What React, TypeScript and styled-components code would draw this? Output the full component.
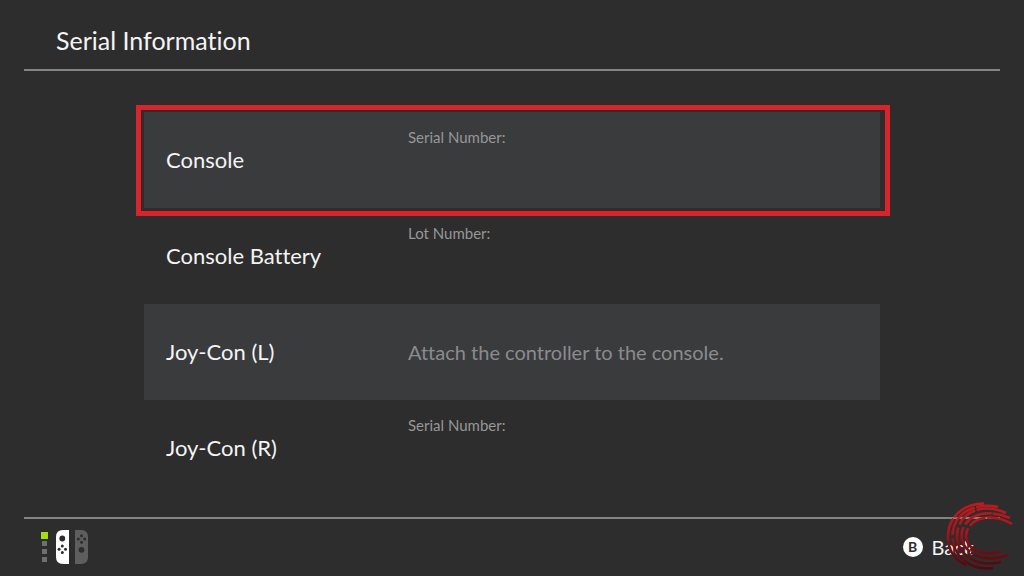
import React from "react";
import styled, { createGlobalStyle } from "styled-components";

const GlobalStyle = createGlobalStyle`
  * { box-sizing: border-box; }
  body {
    margin: 0;
    background: #2d2d2d;
    color: #f4f4f4;
    font-family: Lato, "Noto Sans", sans-serif;
    font-variant-ligatures: none;
  }
`;

const Screen = styled.div`
  position: relative;
  min-height: 100vh;
  padding: 0 24px;
  display: flex;
  flex-direction: column;
`;

const Header = styled.header`
  padding: 24px 32px 13px;
  border-bottom: 2px solid #848484;
`;

const Title = styled.h1`
  margin: 0;
  font-size: 25px;
  line-height: 32px;
  font-weight: 400;
`;

const Content = styled.main`
  flex: 1;
  padding: 41px 120px 21px;
`;

const List = styled.dl`
  margin: 0;
`;

const Row = styled.div<{ $shaded?: boolean }>`
  position: relative;
  display: grid;
  grid-template-columns: 242px 1fr;
  min-height: 96px;
  padding-left: 22px;
  background: ${(p) => (p.$shaded ? "#3a3b3d" : "transparent")};
`;

const Highlight = styled.span`
  position: absolute;
  inset: -7px -10px -8px -8px;
  border: 5px solid #d7252d;
  box-shadow: inset 0 0 0 1px #4a2022;
  pointer-events: none;
`;

const Name = styled.dt`
  align-self: center;
  font-size: 22px;
  line-height: 32px;
`;

const Detail = styled.dd<{ $message?: boolean }>`
  margin: 0;
  padding-top: ${(p) => (p.$message ? "0" : "15px")};
  align-self: ${(p) => (p.$message ? "center" : "start")};
  font-size: ${(p) => (p.$message ? "20px" : "15px")};
  line-height: ${(p) => (p.$message ? "32px" : "20px")};
  color: ${(p) => (p.$message ? "#8b8b8c" : "#979797")};
`;

const Footer = styled.footer`
  display: flex;
  align-items: center;
  justify-content: space-between;
  height: 59px;
  padding: 0 26px 0 16px;
  border-top: 2px solid #848484;
`;

const Controllers = styled.svg`
  display: block;
`;

const BackButton = styled.button`
  display: flex;
  align-items: center;
  gap: 9px;
  padding: 0 0 2px;
  border: 0;
  background: none;
  color: inherit;
  font-family: inherit;
  font-size: 20px;
  line-height: 24px;
`;

const KeyBadge = styled.span`
  width: 20px;
  height: 20px;
  border-radius: 50%;
  background: #fff;
  color: #2d2d2d;
  font-size: 14px;
  line-height: 20px;
  font-weight: 700;
  text-align: center;
`;

const Watermark = styled.svg`
  position: absolute;
  right: 10px;
  bottom: 6px;
  pointer-events: none;
`;

type Entry = { name: string; detail: string; message?: boolean; shaded?: boolean; marked?: boolean };

const entries: Entry[] = [
  { name: "Console", detail: "Serial Number:", shaded: true, marked: true },
  { name: "Console Battery", detail: "Lot Number:" },
  { name: "Joy-Con (L)", detail: "Attach the controller to the console.", message: true, shaded: true },
  { name: "Joy-Con (R)", detail: "Serial Number:" },
];

function ControllerIcon() {
  return (
    <Controllers width="48" height="36" viewBox="0 0 48 36" aria-hidden="true">
      <rect x="1" y="2" width="7" height="7" fill="#a4df12" />
      <g fill="#707070">
        <rect x="2" y="11" width="5" height="5" />
        <rect x="2" y="19" width="5" height="5" />
        <rect x="2" y="27" width="5" height="5" />
      </g>
      <path d="M29 0V34H23Q16 34 16 27V7Q16 0 23 0Z" fill="#fff" />
      <g fill="#2d2d2d">
        <circle cx="22.300" cy="8.500" r="2.900" />
        <circle cx="22.300" cy="16" r="1.500" />
        <circle cx="22.300" cy="22.400" r="1.500" />
        <circle cx="19.100" cy="19.200" r="1.500" />
        <circle cx="25.500" cy="19.200" r="1.500" />
      </g>
      <path d="M35 0V34H41Q48 34 48 27V7Q48 0 41 0Z" fill="#5e5e5e" />
      <g fill="#2d2d2d">
        <circle cx="41.500" cy="5.800" r="1.500" />
        <circle cx="41.500" cy="12.200" r="1.500" />
        <circle cx="38.300" cy="9" r="1.500" />
        <circle cx="44.700" cy="9" r="1.500" />
        <circle cx="41.500" cy="19.800" r="2.900" />
      </g>
    </Controllers>
  );
}

function FingerprintMark() {
  return (
    <Watermark width="68" height="68" viewBox="0 0 68 68" fill="none" aria-hidden="true">
      <defs>
        <linearGradient id="mark" gradientUnits="userSpaceOnUse" x1="34" y1="0" x2="34" y2="68">
          <stop offset="0" stopColor="#bb1c20" />
          <stop offset="0.450" stopColor="#a8151a" />
          <stop offset="0.700" stopColor="#740c12" />
          <stop offset="1" stopColor="#4a0a0e" />
        </linearGradient>
      </defs>
      <g stroke="url(#mark)" strokeWidth="2.600">
        <path d="M38 1.500C16 2 2 16 2 35C2 48 9 58 20 63" strokeDasharray="34 1.500 24 1 60" />
        <path d="M52 5C26 0 6.500 13 6.500 34C6.500 54 24 69 47 66" strokeDasharray="22 1.500 38 3 24 1 60" />
        <path d="M60 11C33 -1 11 13 11 34C11 52 30 66 55 60" strokeDasharray="30 1.500 22 3 34 1 60" />
        <path d="M64 16C36 4 15.500 17 15.500 34C15.500 49 36 63 62 53" strokeDasharray="18 1 30 3 28 1 60" />
        <path d="M66 22C42 8 20 19 20 34C20 46 36 56 55 49" strokeDasharray="26 1.500 18 3 60" />
      </g>
    </Watermark>
  );
}

export default function App() {
  return (
    <>
      <GlobalStyle />
      <Screen>
        <Header>
          <Title>Serial Information</Title>
        </Header>
        <Content>
          <List>
            {entries.map((e) => (
              <Row key={e.name} $shaded={e.shaded}>
                <Name>{e.name}</Name>
                <Detail $message={e.message}>
                  {e.detail}
                  {e.marked && <Highlight />}
                </Detail>
              </Row>
            ))}
          </List>
        </Content>
        <Footer>
          <ControllerIcon />
          <BackButton type="button">
            <KeyBadge>B</KeyBadge>
            Back
          </BackButton>
        </Footer>
        <FingerprintMark />
      </Screen>
    </>
  );
}
